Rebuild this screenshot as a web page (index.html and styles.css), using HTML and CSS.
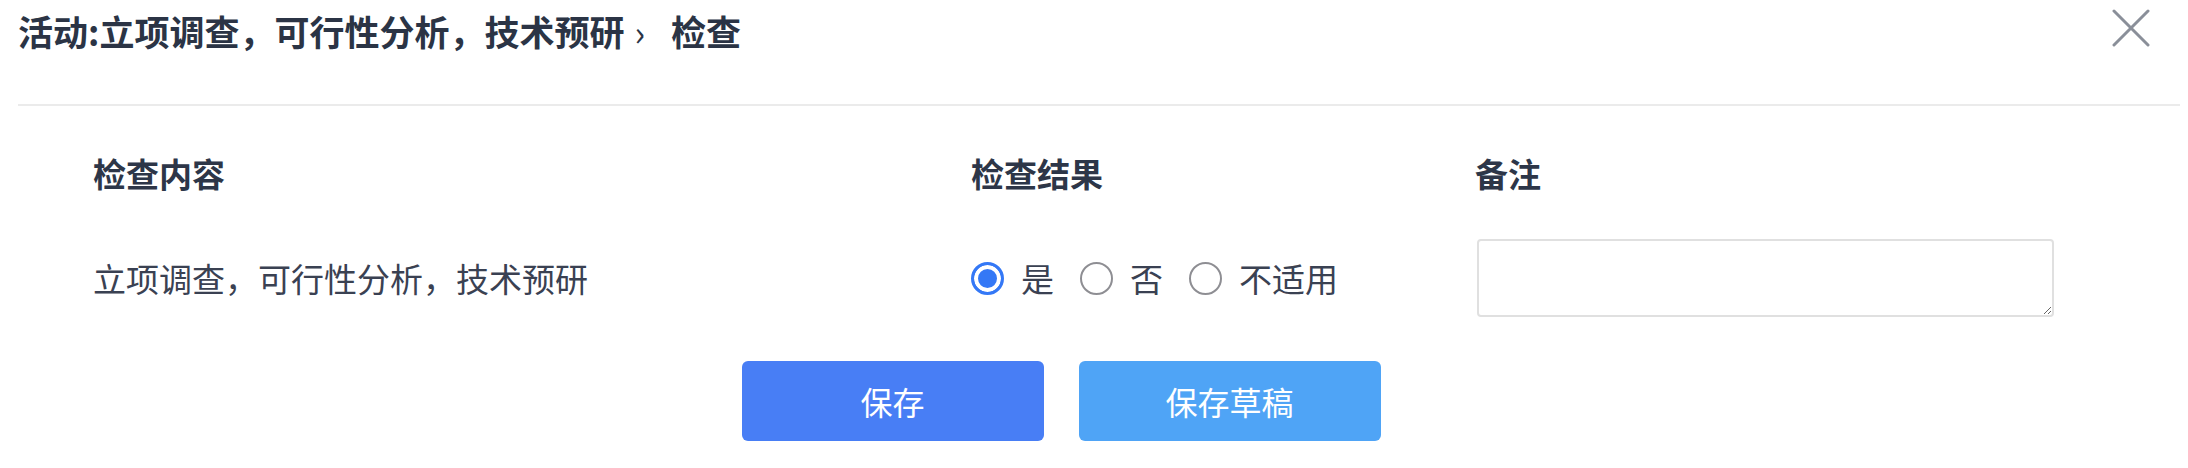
FILE: index.html
```html
<!DOCTYPE html>
<html lang="zh-CN">
<head>
<meta charset="UTF-8" />
<meta name="viewport" content="width=device-width, initial-scale=1" />
<title>检查</title>
<link rel="stylesheet" href="styles.css">
</head>
<body>
<div class="dialog-header">
  <h1 class="title">活动:立项调查，可行性分析，技术预研<span class="sep">›</span>检查</h1>
  <button class="close" aria-label="关闭">
    <svg width="38" height="38" viewBox="0 0 38 38"><path d="M2 2 L36 36 M36 2 L2 36" stroke="#8a8f99" stroke-width="3" stroke-linecap="round" fill="none"/></svg>
  </button>
</div>

<div class="check-table">
  <div class="th">检查内容</div>
  <div class="th">检查结果</div>
  <div class="th">备注</div>

  <div class="td">立项调查，可行性分析，技术预研</div>
  <div class="td radios">
    <label><input type="radio" name="result" checked /> 是</label>
    <label><input type="radio" name="result" /> 否</label>
    <label><input type="radio" name="result" /> 不适用</label>
  </div>
  <div class="td"><textarea class="remark"></textarea></div>
</div>

<div class="actions">
  <button class="btn primary">保存</button>
  <button class="btn draft">保存草稿</button>
</div>
</body>
</html>
```

FILE: styles.css
```css
body {
  margin: 0; background: #fff; color: #333c4e;
  font-family: "Noto Sans CJK SC", "Noto Sans", sans-serif;
}
.dialog-header {
  display: flex; justify-content: space-between; align-items: flex-start;
  height: 106px; box-sizing: border-box; padding: 9px 30px 0 0;
  margin: 0 8px 0 18px; border-bottom: 2px solid #ebebeb;
}
.title {
  margin: 0; font-size: 35px; line-height: 44px; font-weight: 700; color: #2b3445;
}
.title .sep {
  font-weight: 400; margin: 0 26px 0 10px;
}
.close {
  background: none; border: none; padding: 0; margin-top: 0; cursor: pointer;
  width: 38px; height: 38px;
}
.check-table {
  display: grid; grid-template-columns: 878px 504px 1fr;
  row-gap: 44px; align-items: center;
  padding: 45px 0 0 93px;
}
.th {
  font-size: 33px; line-height: 44px; font-weight: 700; color: #2d3648;
}
.td {
  font-size: 33px; line-height: 44px; color: #3a4152;
}
.radios {
  display: flex; align-items: center; gap: 26px;
}
.radios label {
  display: flex; align-items: center; cursor: pointer;
}
.radios input {
  appearance: none; -webkit-appearance: none;
  width: 33px; height: 33px; margin: 0 17px 0 0; box-sizing: border-box;
  border: 2px solid #8e8e93; border-radius: 50%; background: #fff;
}
.radios input:checked {
  border: 3px solid #3478f6; background: #3478f6;
  box-shadow: inset 0 0 0 4px #fff;
}
.remark {
  display: block; width: 577px; height: 78px; box-sizing: border-box;
  border: 2px solid #e0e0e0; border-radius: 4px; margin-left: 2px;
  font-size: 28px; font-family: inherit;
}
.actions {
  display: flex; justify-content: center; gap: 35px;
  padding: 44px 66px 0 0;
}
.btn {
  width: 302px; height: 80px; border: none; border-radius: 6px;
  color: #fff; font-size: 32px; font-family: inherit; cursor: pointer;
}
.btn.primary { background: #487ef5; }
.btn.draft { background: #4fa4f6; }
```
